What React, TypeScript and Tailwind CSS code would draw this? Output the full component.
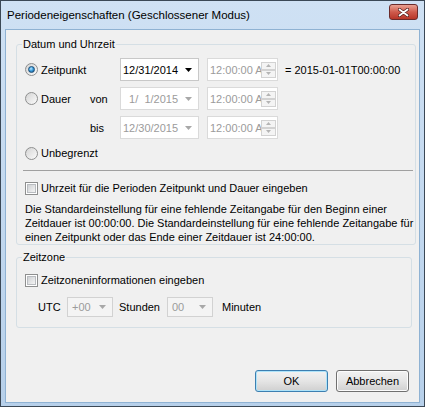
import React from 'react';

const FONT = "font-['Liberation_Sans',Arial,sans-serif]";

const Radio = ({ checked }: { checked?: boolean }) => (
  <span className="flex h-[13px] w-[13px] shrink-0 items-center justify-center rounded-full border border-[#8e8f8f] bg-linear-to-br from-[#d4d4d4] to-[#fbfbfb]">
    {checked && (
      <span className="h-[7px] w-[7px] rounded-full border border-[#1b4d76] bg-[radial-gradient(circle_at_40%_35%,#bfe8ff_0%,#3da0e0_45%,#0f4a80_100%)]" />
    )}
  </span>
);

const Check = () => (
  <span className="flex h-[13px] w-[13px] shrink-0 items-center justify-center border border-[#8e8f8f] bg-white">
    <span className="h-[9px] w-[9px] border border-[#b9bcc0] bg-linear-to-br from-[#cfd1d4] to-[#f4f4f4]" />
  </span>
);

const Arrow = ({ enabled }: { enabled?: boolean }) => (
  <svg width="7" height="4" viewBox="0 0 7 4" className="shrink-0">
    <path d="M0 0h7L3.5 4z" fill={enabled ? '#000' : '#a8a8a8'} />
  </svg>
);

const DateBox = ({ value, enabled }: { value: string; enabled?: boolean }) => (
  <div
    className={
      enabled
        ? 'flex h-[23px] w-[79px] items-center border border-[#c8c8c8] bg-white pl-[2px] pr-[6px] text-black'
        : 'flex h-[23px] w-[79px] items-center border border-[#dadada] bg-white pl-[2px] pr-[6px] text-[#9b9b9b]'
    }
  >
    <span className="flex-1 whitespace-pre">{value}</span>
    <Arrow enabled={enabled} />
  </div>
);

const SpinHalf = ({ up }: { up?: boolean }) => (
  <span className="flex h-[8px] w-[15px] items-center justify-center border border-[#d2d2d2] bg-[#f4f4f4]">
    <svg width="5" height="3" viewBox="0 0 5 3">
      <path d={up ? 'M0 3h5L2.5 0z' : 'M0 0h5L2.5 3z'} fill="#b4b4b4" />
    </svg>
  </span>
);

// the "AM" is clipped by the spinner, as in the native control
const TimeBox = () => (
  <div className="flex h-[23px] w-[71px] items-center border border-[#dadada] bg-white pl-[2px] pr-[1px]">
    <span className="w-[53px] overflow-hidden whitespace-nowrap text-[#9b9b9b]">12:00:00 AM</span>
    <span className="ml-auto flex flex-col">
      <SpinHalf up />
      <SpinHalf />
    </span>
  </div>
);

const Combo = ({ value }: { value: string }) => (
  <div className="flex h-[20px] w-[46px] items-center border border-[#d2d2d2] bg-[#f4f4f4] pl-[4px] pr-[6px] text-[#9b9b9b]">
    <span className="flex-1">{value}</span>
    <Arrow />
  </div>
);

export default function App() {
  return (
    <div className={`${FONT} flex h-[407px] w-[425px] flex-col border border-[#3b4856] bg-linear-to-b from-[#cfe1f4] to-[#b7d0ea] text-[11px] leading-[14px] text-black`}>
      {/* title bar */}
      <div className="flex h-[28px] shrink-0 items-center pl-[6px] pr-[6px]">
        <span className="flex-1 text-[11.5px]">Periodeneigenschaften (Geschlossener Modus)</span>
        <button className="mb-[6px] flex h-[16px] w-[29px] items-center justify-center rounded-[3px] border border-[#6b2b2b] bg-linear-to-b from-[#e8a193] via-[#cf5a4c] to-[#b83528]">
          <svg width="11" height="9" viewBox="0 0 11 9">
            <path d="M1.5 1.5l8 6M9.5 1.5l-8 6" stroke="#4a1a1a" strokeWidth="3.2" strokeLinecap="round" />
            <path d="M1.5 1.5l8 6M9.5 1.5l-8 6" stroke="#fff" strokeWidth="1.8" strokeLinecap="round" />
          </svg>
        </button>
      </div>

      {/* client area */}
      <div className="mx-[4px] mb-[3px] flex flex-1 flex-col border border-[#8fb2d3] bg-[#f0f0f0]">
        <fieldset className="ml-[10px] mt-[7px] w-[396px] rounded-[3px] border border-[#d5dfe5] pb-[0px] pl-[8px] pr-[2px]">
          <legend className="-ml-[3px] px-[1px] leading-[14px]">Datum und Uhrzeit</legend>

          <div className="mt-[7px] flex h-[23px] items-center">
            <div className="flex w-[95px] items-center gap-[3px]">
              <Radio checked />
              <span>Zeitpunkt</span>
            </div>
            <DateBox value="12/31/2014" enabled />
            <div className="ml-[8px]">
              <TimeBox />
            </div>
            <span className="ml-[7px]">= 2015-01-01T00:00:00</span>
          </div>

          <div className="mt-[6px] flex h-[23px] items-center">
            <div className="flex w-[65px] items-center gap-[3px]">
              <Radio />
              <span>Dauer</span>
            </div>
            <span className="w-[30px]">von</span>
            <DateBox value="  1/  1/2015" />
            <div className="ml-[8px]">
              <TimeBox />
            </div>
          </div>

          <div className="mt-[6px] flex h-[23px] items-center">
            <span className="ml-[65px] w-[30px]">bis</span>
            <DateBox value="12/30/2015" />
            <div className="ml-[8px]">
              <TimeBox />
            </div>
          </div>

          <div className="mt-[7px] flex h-[14px] items-center gap-[3px]">
            <Radio />
            <span>Unbegrenzt</span>
          </div>

          <div className="-ml-[2px] mt-[10px] h-px bg-[#a0a0a0]" />

          <div className="mt-[10px] flex h-[14px] items-center gap-[3px]">
            <Check />
            <span>Uhrzeit für die Perioden Zeitpunkt und Dauer eingeben</span>
          </div>

          <p className="mt-[7px] whitespace-nowrap">
            Die Standardeinstellung für eine fehlende Zeitangabe für den Beginn einer
            <br />
            Zeitdauer ist 00:00:00. Die Standardeinstellung für eine fehlende Zeitangabe für
            <br />
            einen Zeitpunkt oder das Ende einer Zeitdauer ist 24:00:00.
          </p>
        </fieldset>

        <fieldset className="ml-[10px] mt-[5px] w-[396px] rounded-[3px] border border-[#d5dfe5] pb-[10px] pl-[8px] pr-[2px]">
          <legend className="-ml-[3px] px-[1px] leading-[14px]">Zeitzone</legend>

          <div className="mt-[9px] flex h-[14px] items-center gap-[3px]">
            <Check />
            <span>Zeitzoneninformationen eingeben</span>
          </div>

          <div className="mt-[10px] flex h-[20px] items-center pl-[13px]">
            <span className="w-[29px]">UTC</span>
            <Combo value="+00" />
            <span className="ml-[6px] w-[48px]">Stunden</span>
            <Combo value="00" />
            <span className="ml-[9px]">Minuten</span>
          </div>
        </fieldset>

        <div className="mt-auto flex justify-end gap-[8px] pb-[10px] pr-[10px]">
          <button className="h-[22px] w-[73px] rounded-[3px] border border-[#3c7fb1] bg-linear-to-b from-[#f2f2f2] via-[#e5e5e5] to-[#d0d0d0] shadow-[inset_0_0_0_1px_#aee3f9]">
            OK
          </button>
          <button className="h-[22px] w-[73px] rounded-[3px] border border-[#707070] bg-linear-to-b from-[#f2f2f2] via-[#e5e5e5] to-[#d0d0d0] shadow-[inset_0_0_0_1px_#fcfcfc]">
            Abbrechen
          </button>
        </div>
      </div>
    </div>
  );
}
